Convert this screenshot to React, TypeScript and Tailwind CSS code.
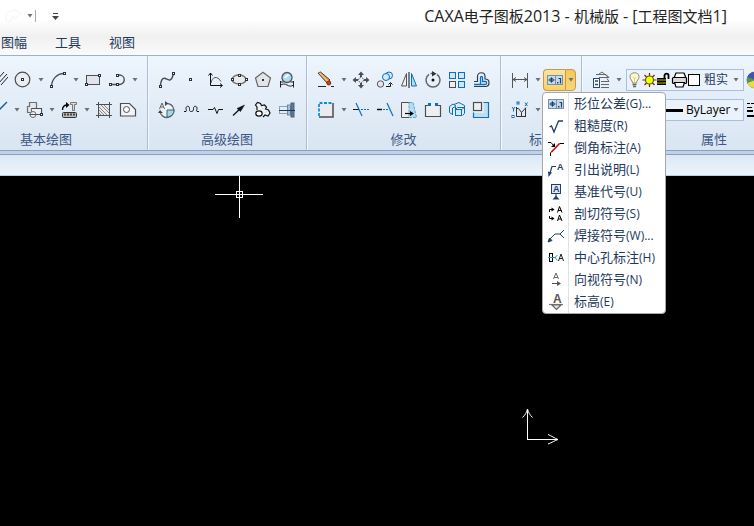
import React, { useState } from 'react';

interface ToolItem {
  name: string;
  icon: React.ReactNode;
  arrow?: boolean;
}

interface MenuEntry {
  label: string;
  hint: string;
  icon: React.ReactNode;
}

const DARK = '#4a4e55';
const BLUE = '#0b6fbd';
const NAVY = '#1f4068';

const Svg: React.FC<{ children: React.ReactNode }> = ({ children }) => (
  <svg width="18" height="18" viewBox="0 0 18 18" fill="none" stroke={DARK} className="shrink-0">
    {children}
  </svg>
);

// Small square handle drawn at the ends of curves
const Dot: React.FC<{ x: number; y: number }> = ({ x, y }) => (
  <rect x={x - 1} y={y - 1} width="2" height="2" fill="#fff" stroke="#2b2f36" shapeRendering="crispEdges" />
);

const Chevron: React.FC = () => (
  <svg width="6" height="4" viewBox="0 0 6 4" className="shrink-0">
    <path d="M0.5 0h5L3 3.5z" fill="#6d7073" />
  </svg>
);

const Letter: React.FC<{ x: number; y: number; size: number; fill?: string; children: string }> = ({ x, y, size, fill = '#111', children }) => (
  <text x={x} y={y} fontSize={size} fontWeight="bold" fontFamily="Liberation Sans, sans-serif" fill={fill} stroke="none">
    {children}
  </text>
);

const ToleranceIcon: React.FC = () => (
  <Svg>
    <rect x="1.5" y="4.5" width="15" height="9" fill="#c4daec" stroke="#7191ae" />
    <path d="M9.5 5v8" stroke="#7191ae" />
    <path d="M2.5 9h6M5.5 6.5v5" stroke={NAVY} />
    <circle cx="5.500" cy="9" r="1.800" stroke={NAVY} strokeWidth="0.800" />
    <rect x="11" y="11" width="1.500" height="1.500" fill={NAVY} stroke="none" />
    <path d="M12.500 7.500h2v5" stroke={NAVY} strokeWidth="1.200" />
  </Svg>
);

const basicTop: ToolItem[] = [
  { name: '平行线', icon: <Svg><path d="M6 10l8-9M8 13l9-10M11 14l7-8" stroke="#222" /></Svg> },
  { name: '圆', arrow: true, icon: <Svg><circle cx="8.5" cy="8.5" r="7.3" fill="#eceef1" strokeWidth="1.2" /><Dot x={8.5} y={8.5} /></Svg> },
  { name: '圆弧', arrow: true, icon: <Svg><path d="M2.5 15C3 8 8 2.5 15 2.5" strokeWidth="1.4" /><Dot x={2.5} y={15.5} /><Dot x={15.5} y={2.5} /></Svg> },
  { name: '矩形', icon: <Svg><rect x="2.5" y="4.5" width="13" height="9" fill="#e2e4e9" /><Dot x={15.5} y={4.5} /><Dot x={2.5} y={13.5} /></Svg> },
  { name: '多段线', arrow: true, icon: <Svg><path d="M2 13.5h9.5a4.700 4.700 0 0 0 0-9.500H9" strokeWidth="1.4" /><Dot x={2.5} y={13.5} /><Dot x={9.5} y={13.5} /><Dot x={9.5} y={4.5} /></Svg> },
];

const basicBottom: ToolItem[] = [
  { name: '直线', arrow: true, icon: <Svg><path d="M4 14L17 1" stroke="#17568f" strokeWidth="1.3" /></Svg> },
  { name: '块', arrow: true, icon: <Svg><path d="M4.5 1.5h7v6h-5v4h-4v-6h2z" fill="#e4e7ea" stroke="#6b6e73" strokeWidth="1.2" /><path d="M6.5 7.500h10v6h-6" fill="#eceef0" strokeWidth="1.2" /><path d="M7 8h9v5H7z" fill="#eceef0" stroke="none" /><circle cx="8" cy="13.500" r="3" fill="#eceef0" stroke="#6b6e73" /><path d="M4.500 13.500h7" /><Dot x={16} y={13.5} /></Svg> },
  { name: '构件', arrow: true, icon: <Svg><path d="M2.5 9c0-3 1-5 5-5" stroke="#000" strokeWidth="1.3" /><path d="M6 1l3.500 3L6 7z" fill="#000" stroke="none" /><path d="M10.5 1.500h6v2h-2v6h-2v-6h-2z" fill="#ddd" stroke="#777" /><rect x="2.5" y="11.500" width="14" height="5" rx="1" fill="#bbb" stroke="#333" /><path d="M4 13.500h11" strokeWidth="2" strokeDasharray="2 1" stroke="#444" /></Svg> },
  { name: '剖面线', icon: <Svg><rect x="3.5" y="3.500" width="11" height="11" fill="#e9eaec" stroke="none" /><path d="M3.5 1v16M14.500 1v16M1 3.500h16M1 14.500h16" /><path d="M4 6l8 8M4 9l5 5M6 4l8 8M9 4l5 5M4 12l2 2" stroke="#888" /></Svg> },
  { name: '填充', icon: <Svg><path d="M1.500 2.500h9l6 6v6.500h-15z" fill="#f3f4f5" strokeWidth="1.2" /><circle cx="7.500" cy="8.500" r="3" fill="#fff" /></Svg> },
];

const advancedTop: ToolItem[] = [
  { name: '样条', icon: <Svg><path d="M2.500 15c0-5 2-9 5-7.500s6 4 8-5" strokeWidth="1.500" /><Dot x={2.5} y={15} /><Dot x={15.5} y={2.5} /></Svg> },
  { name: '点', icon: <Svg><Dot x={8.5} y={8.5} /></Svg> },
  { name: '公式曲线', icon: <Svg><path d="M4.500 2v12.500H16M2.500 4.500l2-2.500 2 2.500M14 12.500l2.500 2-2.500 2" stroke="#111" /><path d="M5 12c1-6 6-8 10-1.500" stroke="#555" /></Svg> },
  { name: '椭圆', icon: <Svg><ellipse cx="9" cy="8.500" rx="7" ry="4.500" fill="#e8eaec" stroke="#777" strokeWidth="1.500" /><Dot x={2} y={8.5} /><Dot x={9} y={4.5} /><Dot x={16} y={8.5} /><Dot x={9} y={13} /></Svg> },
  { name: '正多边形', icon: <Svg><path d="M9 1.200L16.500 7 14 15.500H4L1.500 7z" fill="#e2e4e8" stroke="#666" strokeWidth="1.200" /><rect x="8" y="8" width="2" height="2" fill="#333" stroke="none" /></Svg> },
  { name: '局部放大图', icon: <Svg><circle cx="9" cy="6.500" r="5" fill="#a9dcf2" stroke="#555" strokeWidth="1.300" /><path d="M6.500 7l4-3.500" stroke="#fff" strokeWidth="2" /><path d="M2.500 10v6.500M15.500 10v6.500M2.500 14.500c2-2 4-2 6.500-.5s4 1.500 6.500 0M2.500 11h3M12.500 11h3" stroke="#222" /></Svg> },
];

const advancedBottom: ToolItem[] = [
  { name: '圆弧拟合', icon: <Svg><path d="M8 2.500a7 7 0 1 1-6 8" fill="#eef3f6" stroke="#666" strokeWidth="1.400" /><path d="M9 9h7c0 4-2.500 6.500-7 7z" fill="#a9d6e6" stroke="#35657a" /><path d="M1.500 8l2.500-6 2.500 6M2.500 6h3" stroke="#666" /><path d="M7 0l3 2.500L7 5zM0 12l2-3 3 3z" fill="#444" stroke="none" /></Svg> },
  { name: '波浪线', icon: <Svg><path d="M2 10.500h2c1-1 0-1.500 0-3 0-3 3.500-3 3.500 0s.5 3 2 3 2-1 2-3c0-3 3.500-3 3.500 0 0 1.500-1 2 0 3h2" stroke="#111" /></Svg> },
  { name: '双折线', icon: <Svg><path d="M2 8.500h5l1.500-2 2.500 6 1.500-4H17" stroke="#111" /></Svg> },
  { name: '箭头', icon: <Svg><path d="M3 14.500L12 6" stroke="#111" strokeWidth="1.300" /><path d="M14.500 4L7 7.500l3.500 3z" fill="#111" stroke="#111" strokeWidth="0.500" /></Svg> },
  { name: '齿形', icon: <Svg><path d="M3 9V6L1.500 4 3.500 1.500l3 1 1 2 3-.5 2 2-1 2 3 1 1.500 3-2 3-3-1-2 2" fill="#eef3f6" stroke="#111" strokeWidth="1.200" /><ellipse cx="5" cy="12.500" rx="3.200" ry="2.600" fill="#fff" stroke="#111" strokeWidth="1.200" /><path d="M8 7l3 2M11 12l2-2" stroke="#8ed3ef" strokeDasharray="1 1" /></Svg> },
  { name: '孔轴', icon: <Svg><rect x="1.500" y="5.500" width="8" height="7" fill="#e3edf6" stroke="#8ea3b8" /><rect x="9.500" y="4" width="3" height="10" fill="#a8bfd4" stroke="#7089a3" /><rect x="13" y="2" width="3" height="14" fill="#5b7894" stroke="#4a6683" /><path d="M1 9.500h16" stroke="#1d3550" /></Svg> },
];

const modifyTop: ToolItem[] = [
  { name: '删除', arrow: true, icon: <Svg><path d="M1 2l9 10 3-3L3.500 1z" fill="#d9a25e" stroke="#5b3a1a" /><path d="M2 1.500l9 9" stroke="#f6dfae" /><circle cx="11.800" cy="12" r="2" fill="#d4400f" stroke="#7c2b10" /><path d="M1 15.500h8M14 15.500h3" stroke="#222" strokeWidth="1.200" /></Svg> },
  { name: '平移', icon: <Svg><path d="M9 0.500l3 3.500H6zM9 17.500l3-3.500H6zM.5 9L4 6v6zM17.500 9L14 6v6z" fill={DARK} stroke="none" /><path d="M9 4v2M9 12v2M4 9h2M12 9h2" strokeWidth="2" /><circle cx="9" cy="9" r="2.500" strokeDasharray="1.500 1" /></Svg> },
  { name: '平移复制', icon: <Svg><circle cx="4.500" cy="13" r="3.200" fill="#e4e6e8" stroke="#555" /><circle cx="13" cy="4.500" r="3.500" fill="#d7ebf8" stroke={BLUE} /><circle cx="10" cy="6" r="3.500" fill="#d7ebf8" stroke={BLUE} /><path d="M10 15.500h4.500v-3M12.500 13.500l2-2 2 2" stroke="#111" /></Svg> },
  { name: '镜像', icon: <Svg><path d="M6.500 2.500v12.500h-5z" fill="#eee" stroke="#555" /><path d="M9 1v16" stroke="#111" /><path d="M11.500 2.500v12.500h5z" fill="#b7dcf2" stroke={BLUE} /></Svg> },
  { name: '旋转', icon: <Svg><path d="M9 2.500H6.500M5 3.300a7 7 0 1 0 8 0" stroke="#666" strokeWidth="1.500" /><path d="M8 0l4.500 2.700L8 5.500z" fill="#333" stroke="none" /><circle cx="9" cy="9" r="1.500" fill="#111" stroke="none" /></Svg> },
  { name: '阵列', icon: <Svg><rect x="1.500" y="1.500" width="6" height="6" fill="#cfe6f6" stroke={BLUE} /><rect x="10.500" y="1.500" width="6" height="6" fill="#cfe6f6" stroke={BLUE} /><rect x="10.500" y="10.500" width="6" height="6" fill="#cfe6f6" stroke={BLUE} /><rect x="1.500" y="10.500" width="6" height="6" fill="#eee" /></Svg> },
  { name: '等距线', icon: <Svg><path d="M2 10.500h3.500V5.500C5.500 0.500 13 0.500 13 5.500V8c3 0 4 1.500 4 3.500s-1 4-3.500 4H2" stroke="#333a44" strokeWidth="1.200" /><path d="M2 13.500h6.500V6.500c0-1.500 2-1.500 2 0v4h3c1.500 0 1.500 3 0 3H9" stroke={BLUE} strokeWidth="1.300" /></Svg> },
];

const modifyBottom: ToolItem[] = [
  { name: '拉伸', arrow: true, icon: <Svg><rect x="2" y="2" width="14" height="14" fill="#e9ebee" stroke="none" /><path d="M16 2v14H2" strokeWidth="1.500" /><path d="M2 15V2h14" stroke="#0a8fe0" strokeWidth="1.800" strokeDasharray="3 1.500" /></Svg> },
  { name: '裁剪', icon: <Svg><path d="M1 8.500h6" stroke="#111" /><path d="M4 2l6 13" stroke={BLUE} strokeWidth="1.200" /><path d="M9 8.500h8" stroke={BLUE} strokeDasharray="2 1" /></Svg> },
  { name: '延伸', icon: <Svg><path d="M1 8.500h5" stroke="#111" strokeWidth="1.500" /><path d="M7 8.500h6" stroke={BLUE} strokeDasharray="2 1" /><path d="M11 2l6 13" stroke={BLUE} strokeWidth="1.200" /></Svg> },
  { name: '过渡', icon: <Svg><path d="M9 1.500H1.500v15H9" fill="#eee" /><path d="M9 1.500h4l3.500 15H9z" fill="#b9dcf0" stroke="#57a5d4" strokeDasharray="3 1" /><path d="M5 12.500h6" stroke="#000" strokeWidth="1.200" /><path d="M10 10l4 2.500-4 2.500z" fill="#000" stroke="none" /></Svg> },
  { name: '打断', icon: <Svg><rect x="1.500" y="4.500" width="15" height="11" fill="#eceef0" stroke="none" /><path d="M4.500 4.500h-3v11h15v-11h-3M7 4.500h4" strokeWidth="1.200" /><path d="M7 4.500h4" stroke="#eceef0" strokeWidth="2" /><rect x="4" y="2" width="3" height="3" fill={BLUE} stroke="none" /><rect x="11" y="2" width="3" height="3" fill={BLUE} stroke="none" /></Svg> },
  { name: '分解', icon: <Svg><path d="M1.500 5.500L5 3l3 2M1.500 5.500v6l3 2M6 3.500l5-2 5.500 3v3M4.500 7l3-1.500v9M4.500 7v7" stroke={BLUE} /><path d="M7.500 8.500l2-2h7v6l-2 2M14 8.500l2-2" stroke={BLUE} /><rect x="7.500" y="8.500" width="6" height="6" fill="#d3e9f7" stroke={BLUE} /></Svg> },
  { name: '缩放', icon: <Svg><path d="M12 2h4v14H2v-4h10z" fill="#c0dfee" stroke="none" /><path d="M11.500 1.500h5v15h-15v-5" stroke={BLUE} strokeWidth="1.200" /><rect x="1.500" y="1.500" width="8" height="8" fill="#eee" strokeWidth="1.200" /></Svg> },
];

const dimIcon = <Svg><path d="M1.500 2v15M16.500 2v15M2 8.500h14M5 6.500l-3 2 3 2M13 6.500l3 2-3 2" stroke="#555" /></Svg>;

const coordIcon = (
  <Svg>
    <path d="M5.500 6v9.500H15M5.500 7.500h2l3 4 4.500-5M10.500 11.500v4M14.500 7v8" stroke="#333" />
    <rect x="6" y="1" width="2" height="2" stroke={BLUE} />
    <rect x="1" y="14.500" width="2" height="2" stroke={BLUE} />
    <path d="M1 6l1.500 2L4 6M2.500 8v2.500M14 1.500l2.500 3.500M16.500 1.500L14 5" stroke={BLUE} />
  </Svg>
);

const layerIcon = (
  <Svg>
    <path d="M4 3.500h10l3 3H7M7 3l3-2 6 5M9 10.500h8l-2-3M9 13.500h8M9 16.500h8" stroke="#666" />
    <rect x="1.500" y="7.500" width="6" height="9" fill="#fff" stroke="#2a4a6b" />
    <path d="M3 10h3M3 13.500h3" stroke="#2a4a6b" strokeWidth="1.500" />
  </Svg>
);

const annotationMenu: MenuEntry[] = [
  { label: '形位公差', hint: '(G)...', icon: <ToleranceIcon /> },
  { label: '粗糙度', hint: '(R)', icon: <Svg><path d="M2.500 10l2-1 2.500 6 4.500-11h4.500" stroke={NAVY} strokeWidth="1.300" /></Svg> },
  { label: '倒角标注', hint: '(A)', icon: <Svg><path d="M3.500 17v-3l1.500-2M12.500 4.500H17" stroke="#000" /><path d="M4.500 13l8-8.500" stroke="#e10000" strokeWidth="1.600" /><path d="M1 3.500h3l3 3.500" stroke="#000" /><path d="M8 4v4H4z" fill="#000" stroke="none" /></Svg> },
  { label: '引出说明', hint: '(L)', icon: <Svg><path d="M3 12l2-6.500h4" stroke={NAVY} strokeWidth="1.200" /><path d="M1 10.500l4 1L1.500 16z" fill={NAVY} stroke="none" /><Letter x={10} y={9} size={9} fill={NAVY}>A</Letter></Svg> },
  { label: '基准代号', hint: '(U)', icon: <Svg><rect x="4.500" y="1.500" width="9" height="9" fill="#dfeaf5" stroke={NAVY} /><Letter x={6} y={9} size={9} fill={NAVY}>A</Letter><path d="M9 10.500v3" stroke={NAVY} /><path d="M5.500 16.500L9 12.500l3.500 4z" fill={NAVY} stroke="none" /></Svg> },
  { label: '剖切符号', hint: '(S)', icon: <Svg><path d="M2.500 7V4.500H5M2.500 11v2.500H5" stroke="#000" /><path d="M4.500 2.500l3 2-3 2zM4.500 11.500l3 2-3 2z" fill="#000" stroke="none" /><path d="M10.500 7.500l2-6 2.500 6M11 5.500h3.500M10.500 16l2-6 2.500 6M11 14h3.500" stroke="#000" /></Svg> },
  { label: '焊接符号', hint: '(W)...', icon: <Svg><path d="M2 13l6-6h5M17 3l-4 4 4 4" stroke={NAVY} /><path d="M1 15l1.500-4 2.500 2.500z" fill={NAVY} stroke={NAVY} /></Svg> },
  { label: '中心孔标注', hint: '(H)', icon: <Svg><rect x="2.500" y="4.500" width="3" height="8" stroke="#000" /><path d="M1 8.500h8M10.500 6L8 8.500l2.500 3" stroke="#20a0b8" /><path d="M11.500 12l2.500-7 2.500 7M12.500 9.500h3" stroke="#222" /></Svg> },
  { label: '向视符号', hint: '(N)', icon: <Svg><path d="M6.500 8L9 2l2.500 6M7 6.500h4" stroke="#666" /><path d="M5 12.500h6" stroke="#555" /><path d="M10 10l4 2.500-4 2.500z" fill="#555" stroke="none" /></Svg> },
  { label: '标高', hint: '(E)', icon: <Svg><path d="M2 11.500h14" stroke="#777" strokeWidth="1.200" /><path d="M5 12l4.500 4.500L14 12z" fill="#e8e8e0" stroke="#666" strokeWidth="1.200" /><Letter x={6} y={10} size={12} fill="#555">A</Letter></Svg> },
];

const ToolButton: React.FC<ToolItem> = ({ name, icon, arrow }) => (
  <div className="flex h-6 shrink-0">
    <button aria-label={name} className="flex w-6 items-center justify-center rounded-sm hover:bg-amber-200">
      {icon}
    </button>
    {arrow && (
      <button aria-label={`${name}选项`} className="flex w-[11px] items-center justify-center rounded-sm hover:bg-amber-200">
        <Chevron />
      </button>
    )}
  </div>
);

const ToolRow: React.FC<{ items: ToolItem[]; end?: boolean }> = ({ items, end }) => (
  <div className={end ? 'flex justify-end' : 'flex'}>
    {items.map((item) => (
      <ToolButton key={item.name} {...item} />
    ))}
  </div>
);

const Group: React.FC<{ title: string; className?: string; titleClass?: string; children: React.ReactNode }> = ({ title, className = '', titleClass = '', children }) => (
  <section className={`shrink-0 border-r border-[#a9bdd6] pt-3 pb-px shadow-[1px_0_0_#f5f9fe] ${className}`}>
    <div className="flex flex-col gap-1.5">{children}</div>
    <h2 className={`mt-[7px] h-5 text-center text-[13px] leading-5 text-[#3e5685] ${titleClass}`}>{title}</h2>
  </section>
);

const AnnotationMenu: React.FC = () => (
  <ul role="menu" className="absolute top-full -left-px z-10 w-[124px] rounded-sm border border-[#a4a8ae] bg-white">
    {annotationMenu.map((entry) => (
      <li key={entry.label} role="none">
        <button role="menuitem" className="flex h-[22px] w-full items-center text-left whitespace-nowrap text-[#1e395b] hover:bg-amber-100">
          <span className="flex h-full w-[26px] shrink-0 items-center justify-center border-r border-[#dfe3e8]">{entry.icon}</span>
          <span className="pl-[5px] text-[13px]">{entry.label}</span>
          <span className="text-xs">{entry.hint}</span>
        </button>
      </li>
    ))}
  </ul>
);

const LayerIcons: React.FC = () => (
  <svg width="74" height="18" viewBox="0 0 74 18" fill="none" className="shrink-0">
    {/* bulb */}
    <path d="M5.500 12C5.500 9 3 9 3 5.500 3 0.500 12 0.500 12 5.500 12 9 9.500 9 9.500 12z" fill="#fffbd0" stroke="#8a8a7a" />
    <path d="M5.500 13.500h4M6 15.500h3" stroke="#666" strokeWidth="1.500" />
    <path d="M6 6l1.500 2L9 6M7.500 8v4" stroke="#d9d07a" />
    {/* sun */}
    <path d="M22.500 2v14M15.500 9h14M17.500 4l10 10M27.500 4l-10 10" stroke="#c00000" strokeWidth="1.200" />
    <circle cx="22.500" cy="9" r="4" fill="#ffff00" stroke="#1c8a00" strokeWidth="1.200" />
    {/* lock */}
    <path d="M37.500 8V4.500c0-2.500 4-2.500 4 0V8" stroke="#000" strokeWidth="1.800" />
    <rect x="30" y="7" width="9" height="7" fill="#5f5f00" />
    <path d="M30 7.500h9M30 10.500h9M30 13.500h9" stroke="#000" />
    {/* printer */}
    <path d="M47 7l2-5h8l2 5" fill="#fff" stroke="#000" strokeWidth="1.200" />
    <rect x="45.500" y="6.500" width="14" height="6" rx="1" fill="#d9d9d9" stroke="#000" strokeWidth="1.200" />
    <path d="M47.500 11.500h10l-1.500 4.500h-7z" fill="#fff" stroke="#000" strokeWidth="1.200" />
    {/* colour swatch */}
    <rect x="61.500" y="3.500" width="11" height="11" fill="#fff" stroke="#000" />
  </svg>
);

const Combo: React.FC<{ label: string; value: string; prefix: React.ReactNode; textClass: string }> = ({ label, value, prefix, textClass }) => (
  <div className="ml-[2px] flex h-[22px] w-[118px] items-center border border-[#a9bfdc] bg-[#eaf2fb] pr-1">
    {prefix}
    <select aria-label={label} className={`min-w-0 flex-1 appearance-none bg-transparent p-0 outline-none ${textClass}`}>
      <option>{value}</option>
    </select>
    <Chevron />
  </div>
);

const tabs = ['图幅', '工具', '视图'];

export default function App() {
  const [menuOpen, setMenuOpen] = useState(true);

  return (
    <div className="flex h-screen flex-col overflow-hidden bg-black font-['Open_Sans','Noto_Sans_CJK_SC',sans-serif]">
      <header className="bg-linear-to-b from-white from-35% via-[#f0f0f0] via-65% to-[#fbfbfb]">
        <div className="flex h-8 items-center justify-between pr-[27px] pl-1">
          <div className="flex items-center">
            <button aria-label="重做" className="flex">
              <svg width="20" height="16" viewBox="0 0 20 16">
                <path d="M2 13V7c0-3 3-4 8-4V1l7 5-7 5V8c-3 0-3 1-3 5z" fill="#fff" stroke="#f4f4f4" />
              </svg>
            </button>
            <button aria-label="重做列表" className="ml-[3px] flex"><Chevron /></button>
            <span className="ml-[2px] h-3 w-px bg-[#a8a8a8]" />
            <button aria-label="自定义快速访问工具栏" className="ml-4">
              <svg width="7" height="7" viewBox="0 0 7 7"><path d="M1 0h5v1H1zM0 3h7L3.500 7z" fill="#444" /></svg>
            </button>
          </div>
          <h1 className="text-base leading-8 whitespace-nowrap text-[#222]">
            CAXA<span className="text-[15px]">电子图板</span>2013 - <span className="text-[15px]">机械版</span> - [<span className="text-[15px]">工程图文档</span>1]
          </h1>
        </div>
        <nav className="flex h-6 gap-7 border-b border-[#9db1cb] pl-px">
          {tabs.map((tab) => (
            <a key={tab} href={`#${tab}`} className="text-[13px] leading-5 text-[#1e395b]">{tab}</a>
          ))}
        </nav>
      </header>

      <div className="flex bg-linear-to-b from-[#edf5fd] to-[#d9e5f2]">
        <Group title="基本绘图" className="w-[148px] pr-[7px]" titleClass="pr-12">
          <ToolRow items={basicTop} end />
          <ToolRow items={basicBottom} end />
        </Group>
        <Group title="高级绘图" className="px-[7px]">
          <ToolRow items={advancedTop} />
          <ToolRow items={advancedBottom} />
        </Group>
        <Group title="修改" className="px-[7px]">
          <ToolRow items={modifyTop} />
          <ToolRow items={modifyBottom} />
        </Group>
        <Group title="标注" className="pr-[5px] pl-[7px]">
          <div className="flex">
            <ToolButton name="尺寸标注" icon={dimIcon} arrow />
            <div className="relative flex h-6 items-center">
              <button aria-label="形位公差" className="flex h-[22px] w-[22px] items-center justify-center rounded-l-sm border border-r-0 border-[#c29b4a] bg-linear-to-b from-[#fde3a0] to-[#fbd15f]">
                <ToleranceIcon />
              </button>
              <button
                aria-label="标注菜单"
                aria-expanded={menuOpen}
                onClick={() => setMenuOpen(!menuOpen)}
                className="flex h-[22px] w-[11px] items-center justify-center rounded-r-sm border border-[#c29b4a] bg-linear-to-b from-[#f6c65a] to-[#f9d67a]"
              >
                <Chevron />
              </button>
              {menuOpen && <AnnotationMenu />}
            </div>
          </div>
          <ToolButton name="坐标标注" icon={coordIcon} arrow />
        </Group>
        <Group title="属性" className="w-[258px] pl-[7px]">
          <div className="flex items-center">
            <ToolButton name="图层" icon={layerIcon} arrow />
            <Combo label="图层" value="粗实" prefix={<LayerIcons />} textClass="pl-[3px] text-xs text-[#1e395b]" />
            <button aria-label="颜色" className="ml-[2px] flex">
              <svg width="18" height="18" viewBox="0 0 18 18">
                <circle cx="9" cy="9" r="8" fill="#4d9a4a" stroke="#777" />
                <path d="M9 9L1.500 6A8 8 0 0 1 9 1z" fill="#4553a8" />
                <path d="M9 9L1.500 12A8 8 0 0 0 9 17z" fill="#e8dc4a" />
                <path d="M9 1a8 8 0 0 1 0 16z" fill="#c8452f" />
              </svg>
            </button>
          </div>
          <div className="flex items-center">
            <ToolButton name="匹配" icon={layerIcon} arrow />
            <Combo label="线宽" value="ByLayer" prefix={<span className="ml-1 h-[3px] w-[52px] shrink-0 bg-black" />} textClass="pl-[3px] text-xs text-black" />
            <button aria-label="线型" className="ml-[2px] flex">
              <svg width="18" height="18" viewBox="0 0 18 18" stroke="#000">
                <path d="M1 2.500h16" strokeDasharray="3 1" />
                <path d="M1 6.500h16" strokeDasharray="5 2" />
                <path d="M1 10h16" strokeWidth="2" strokeDasharray="6 1" />
                <path d="M1 15h16" strokeWidth="2" />
              </svg>
            </button>
          </div>
        </Group>
      </div>
      <div className="h-[5px] shrink-0 border-y border-[#8aa2c2] bg-[#c0d0e5]" />
      <div className="h-[21px] shrink-0 border-b border-[#b5cfe8] bg-linear-to-b from-[#dce8f5] to-[#edf4fc]" />

      <main className="relative flex-1 bg-black">
        <svg width="48" height="42" viewBox="0 0 48 42" fill="none" stroke="#fff" shapeRendering="crispEdges" className="absolute top-0 left-[215px]">
          <path d="M0 18.500h48M24.500 0v42" />
          <rect x="21.500" y="15.500" width="6" height="6" />
        </svg>
        <svg width="38" height="38" viewBox="0 0 38 38" fill="none" stroke="#fff" className="absolute top-[231px] left-[521px]">
          <path d="M6.500 2v30.500H37" shapeRendering="crispEdges" />
          <path d="M1.500 10.500c3-3 4-5 5-8.500 1 3.500 2 5.500 5 8.500M27 27.500c3 1 7 4 10 5-3 1-6 3-10 4.500" />
        </svg>
      </main>
    </div>
  );
}
